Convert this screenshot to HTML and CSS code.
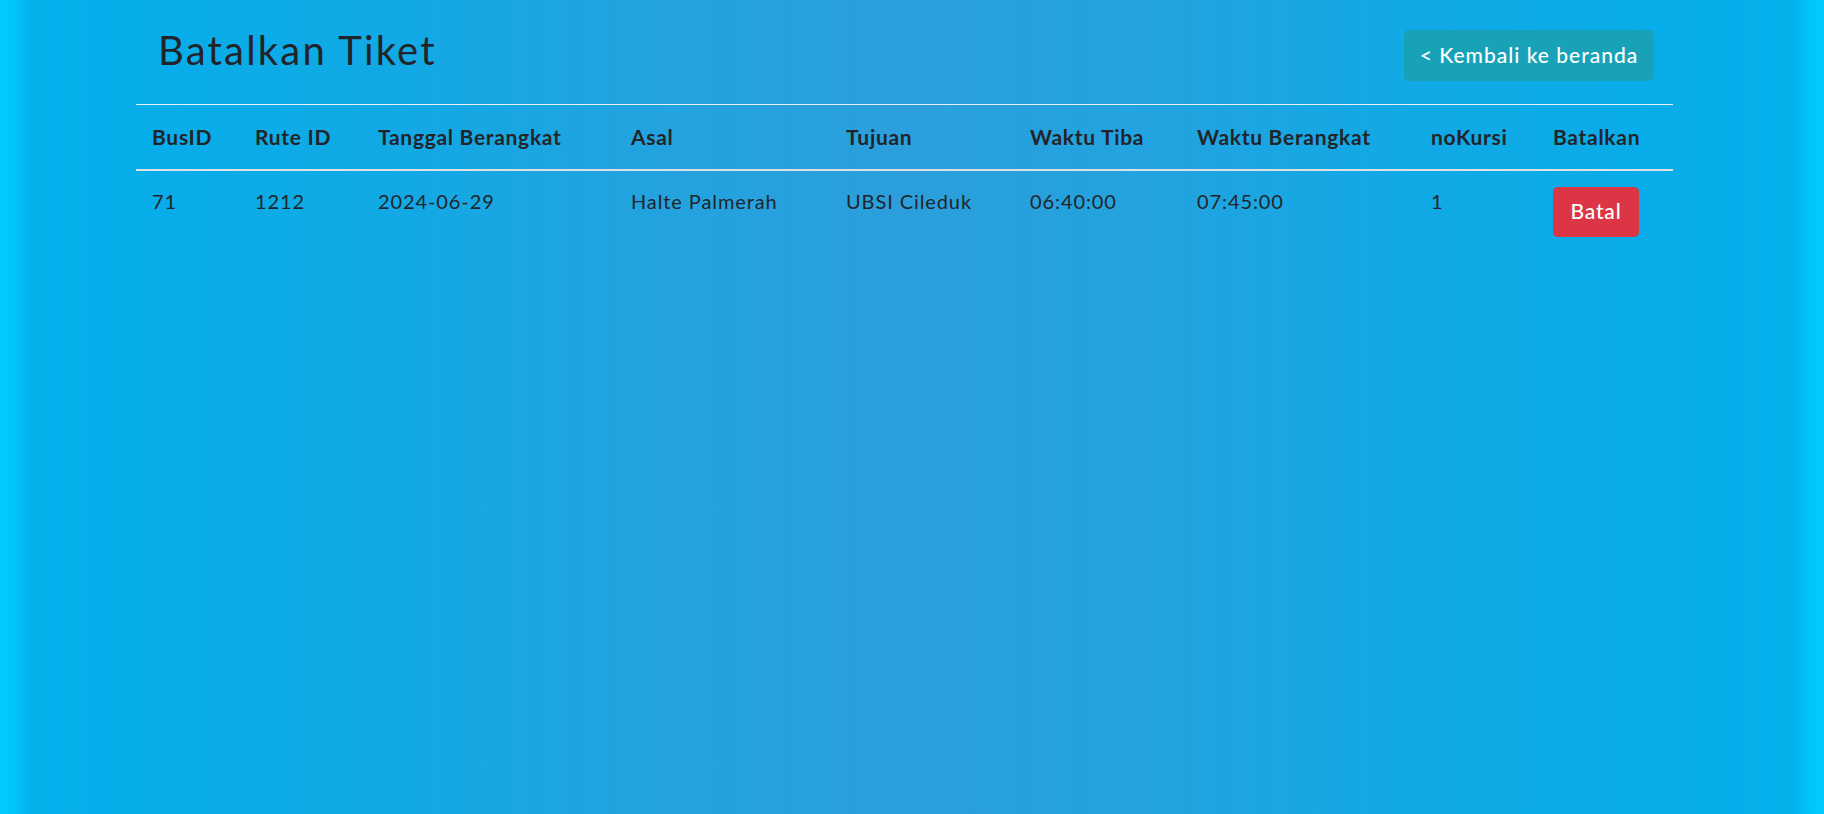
FILE: index.html
```html
<!DOCTYPE html>
<html lang="id">
<head>
<meta charset="utf-8">
<title>Batalkan Tiket</title>
<link rel="stylesheet" href="styles.css">
</head>
<body>
<div class="page">
  <div class="top-bar">
    <h1 class="title">Batalkan Tiket</h1>
    <a class="btn btn-info" href="#">&lt; Kembali ke beranda</a>
  </div>
  <table class="ticket-table">
    <colgroup>
      <col class="c-bus">
      <col class="c-rute">
      <col class="c-tgl">
      <col class="c-asal">
      <col class="c-tujuan">
      <col class="c-tiba">
      <col class="c-berangkat">
      <col class="c-kursi">
      <col class="c-batal">
    </colgroup>
    <thead>
      <tr>
        <th>BusID</th>
        <th>Rute ID</th>
        <th>Tanggal Berangkat</th>
        <th>Asal</th>
        <th>Tujuan</th>
        <th>Waktu Tiba</th>
        <th>Waktu Berangkat</th>
        <th>noKursi</th>
        <th>Batalkan</th>
      </tr>
    </thead>
    <tbody>
      <tr>
        <td>71</td>
        <td>1212</td>
        <td>2024-06-29</td>
        <td>Halte Palmerah</td>
        <td>UBSI Cileduk</td>
        <td>06:40:00</td>
        <td>07:45:00</td>
        <td>1</td>
        <td><button class="btn btn-danger" type="button">Batal</button></td>
      </tr>
    </tbody>
  </table>
</div>
</body>
</html>
```

FILE: styles.css
```css
html, body {
  margin: 0;
  padding: 0;
  height: 100%;
}

body {
  font-family: Lato, "Open Sans", sans-serif;
  color: #212529;
  background: linear-gradient(90deg,
    #00cbfc 0px,
    #00c6fa 14px,
    #04b2ec 30px,
    #05aeea 110px,
    #12a9e5 400px,
    #22a3df 650px,
    #2b9fdb 912px,
    #22a3df 1150px,
    #12a9e5 1400px,
    #05aeea 1730px,
    #04b2ec 1794px,
    #00c6fa 1810px,
    #00cbfc 1824px);
  min-height: 814px;
}

.page {
  padding: 0 151px 0 136px;
}

.top-bar {
  display: flex;
  justify-content: space-between;
  align-items: flex-start;
  padding: 26px 19px 0 22px;
}

.title {
  margin: 0;
  font-size: 40px;
  line-height: 48px;
  font-weight: 400;
  letter-spacing: 2.2px;
  color: #212529;
}

.btn {
  display: inline-block;
  border: 0;
  border-radius: 5px;
  font-family: Lato, "Open Sans", sans-serif;
  font-size: 21px;
  line-height: 30px;
  color: #fff;
  text-decoration: none;
  cursor: pointer;
}

.btn-info {
  margin-top: 4px;
  padding: 10px 12px 11px;
  background: #17a2b8;
  letter-spacing: 1px;
  width: 250px;
  box-sizing: border-box;
  text-align: center;
  font-weight: 500;
}

.btn-danger {
  padding: 9px 8px 11px;
  background: #dc3545;
  letter-spacing: 0.8px;
  width: 86px;
  height: 50px;
  box-sizing: border-box;
  text-align: center;
  font-weight: 500;
}

.ticket-table {
  width: 1537px;
  margin-top: 23px;
  border-collapse: collapse;
  table-layout: fixed;
}

.c-bus { width: 103px; }
.c-rute { width: 123px; }
.c-tgl { width: 253px; }
.c-asal { width: 215px; }
.c-tujuan { width: 184px; }
.c-tiba { width: 167px; }
.c-berangkat { width: 234px; }
.c-kursi { width: 122px; }
.c-batal { width: 136px; }

.ticket-table th {
  text-align: left;
  font-size: 21px;
  font-weight: 700;
  letter-spacing: 0.7px;
  line-height: 28px;
  padding: 18px 0 18px 16px;
  border-top: 1px solid #e8f1f8;
  border-bottom: 2px solid #dee2e6;
  white-space: nowrap;
}

.ticket-table td {
  font-size: 20px;
  letter-spacing: 0.9px;
  line-height: 28px;
  padding: 16px 0 17px 16px;
  vertical-align: top;
  white-space: nowrap;
}
```
